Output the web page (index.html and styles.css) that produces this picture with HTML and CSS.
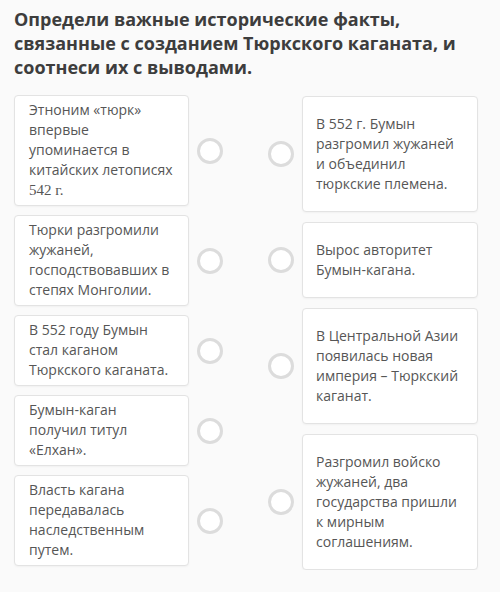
FILE: index.html
```html
<!DOCTYPE html>
<html>
<head>
    <title>Тюркский каганат</title>
    <link rel="stylesheet" href="styles.css">
</head>
<body>
    <!-- Matching task: facts on the left, conclusions on the right -->
    <div class="task">
        <h1 class="task-title">Определи важные исторические факты, связанные с созданием Тюркского каганата, и соотнеси их с выводами.</h1>

        <div class="match">
            <div class="col col-left">
                <div class="row">
                    <div class="card">Этноним «тюрк» впервые упоминается в китайских летописях <span class="num">542 г.</span></div>
                    <span class="dot"></span>
                </div>
                <div class="row">
                    <div class="card">Тюрки разгромили жужаней, господствовавших в степях Монголии.</div>
                    <span class="dot"></span>
                </div>
                <div class="row">
                    <div class="card">В 552 году Бумын стал каганом Тюркского каганата.</div>
                    <span class="dot"></span>
                </div>
                <div class="row">
                    <div class="card">Бумын-каган получил титул «Елхан».</div>
                    <span class="dot"></span>
                </div>
                <div class="row">
                    <div class="card">Власть кагана передавалась наследственным путем.</div>
                    <span class="dot"></span>
                </div>
            </div>

            <div class="col col-right">
                <div class="row">
                    <span class="dot"></span>
                    <div class="card card-tall">В 552 г. Бумын разгромил жужаней и объединил тюркские племена.</div>
                </div>
                <div class="row">
                    <span class="dot"></span>
                    <div class="card card-tall">Вырос авторитет Бумын-кагана.</div>
                </div>
                <div class="row">
                    <span class="dot"></span>
                    <div class="card card-tall">В Центральной Азии появилась новая империя – Тюркский каганат.</div>
                </div>
                <div class="row">
                    <span class="dot"></span>
                    <div class="card card-tall">Разгромил войско жужаней, два государства пришли к мирным соглашениям.</div>
                </div>
            </div>
        </div>
    </div>
</body>
</html>
```

FILE: styles.css
```css
/* page */
body {
    margin: 0;
    background: #fafafa;
    font-family: 'Open Sans', 'Noto Sans', sans-serif;
    color: #565656;
}

.task {
    padding: 7px 22px 0 14px;
}

/* title */
.task-title {
    margin: 0 0 16px 0;
    font-size: 18px;
    line-height: 24px;
    font-weight: 700;
    color: #3d3d3d;
    width: 460px;
}

/* two columns */
.match {
    display: flex;
    justify-content: space-between;
}

.col {
    display: flex;
    flex-direction: column;
}

.col-left {
    gap: 9px;
}

.col-right {
    gap: 10px;
    padding-top: 1px;
}

.row {
    display: flex;
    align-items: center;
    gap: 8px;
}

/* cards */
.card {
    width: 175px;
    box-sizing: border-box;
    padding: 4px 14px 5px 14px;
    background: #fff;
    border: 1px solid #e3e3e3;
    border-radius: 4px;
    box-shadow: 0 1px 2px rgba(0, 0, 0, 0.04);
    font-size: 14px;
    line-height: 20px;
}

.card-tall {
    width: 176px;
    padding: 17px 12px 17px 13px;
}

.num {
    font-family: 'Liberation Serif', serif;
    font-size: 15px;
    line-height: 1;
}

/* answer circles */
.dot {
    width: 20px;
    height: 20px;
    border: 3px solid #dcdcdc;
    border-radius: 50%;
    background: #fff;
    flex-shrink: 0;
}
```
